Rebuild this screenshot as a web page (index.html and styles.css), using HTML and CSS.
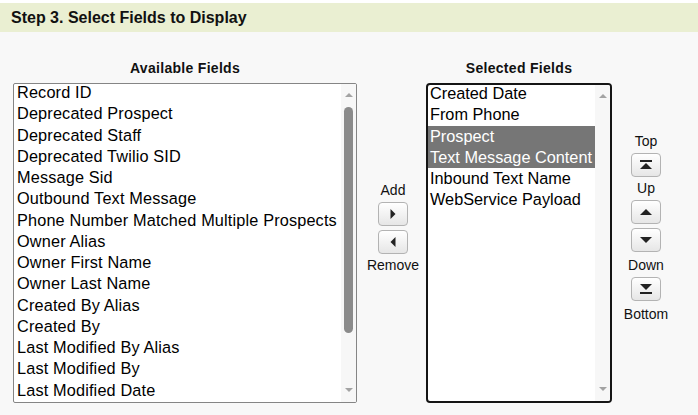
FILE: index.html
```html
<!DOCTYPE html>
<html lang="en">
<head>
    <meta charset="UTF-8">
    <meta name="viewport" content="width=device-width, initial-scale=1.0">
    <title>Select Fields to Display</title>
    <link rel="stylesheet" href="styles.css">
</head>
<body>

<div class="step">
    <h3 class="step-title">Step 3. Select Fields to Display</h3>

    <div class="picker">
        <!-- Campos disponíveis -->
        <div class="list-col available">
            <div class="list-label">Available Fields</div>
            <div class="listbox">
                <ul class="options">
                    <li>Record ID</li>
                    <li>Deprecated Prospect</li>
                    <li>Deprecated Staff</li>
                    <li>Deprecated Twilio SID</li>
                    <li>Message Sid</li>
                    <li>Outbound Text Message</li>
                    <li>Phone Number Matched Multiple Prospects</li>
                    <li>Owner Alias</li>
                    <li>Owner First Name</li>
                    <li>Owner Last Name</li>
                    <li>Created By Alias</li>
                    <li>Created By</li>
                    <li>Last Modified By Alias</li>
                    <li>Last Modified By</li>
                    <li>Last Modified Date</li>
                </ul>
                <div class="scrollbar">
                    <span class="sb-arrow up"><svg width="8" height="4" viewBox="0 0 8 4"><path d="M0 4L4 0L8 4Z"/></svg></span>
                    <span class="sb-thumb"></span>
                    <span class="sb-arrow down"><svg width="8" height="4" viewBox="0 0 8 4"><path d="M0 0L8 0L4 4Z"/></svg></span>
                </div>
            </div>
        </div>

        <!-- Adicionar / remover -->
        <div class="move-col add-remove">
            <div class="btn-label">Add</div>
            <button class="icon-btn" title="Add"><svg width="6" height="10" viewBox="0 0 6 10"><path d="M0.5 0L5.5 5L0.5 10Z"/></svg></button>
            <button class="icon-btn" title="Remove"><svg width="6" height="10" viewBox="0 0 6 10"><path d="M5.5 0L0.5 5L5.5 10Z"/></svg></button>
            <div class="btn-label">Remove</div>
        </div>

        <!-- Campos selecionados -->
        <div class="list-col selected">
            <div class="list-label">Selected Fields</div>
            <div class="listbox focused">
                <ul class="options">
                    <li>Created Date</li>
                    <li>From Phone</li>
                    <li class="is-selected">Prospect</li>
                    <li class="is-selected">Text Message Content</li>
                    <li>Inbound Text Name</li>
                    <li>WebService Payload</li>
                </ul>
                <div class="scrollbar">
                    <span class="sb-arrow up"><svg width="8" height="4" viewBox="0 0 8 4"><path d="M0 4L4 0L8 4Z"/></svg></span>
                    <span class="sb-arrow down"><svg width="8" height="4" viewBox="0 0 8 4"><path d="M0 0L8 0L4 4Z"/></svg></span>
                </div>
            </div>
        </div>

        <!-- Ordenação -->
        <div class="move-col order">
            <div class="btn-label">Top</div>
            <button class="icon-btn" title="Top"><svg width="12" height="10" viewBox="0 0 12 10"><rect x="0" y="0" width="12" height="2"/><path d="M0 9L6 3L12 9Z"/></svg></button>
            <div class="btn-label">Up</div>
            <button class="icon-btn" title="Up"><svg width="12" height="6" viewBox="0 0 12 6"><path d="M0 6L6 0L12 6Z"/></svg></button>
            <button class="icon-btn" title="Down"><svg width="12" height="6" viewBox="0 0 12 6"><path d="M0 0L12 0L6 6Z"/></svg></button>
            <div class="btn-label tall">Down</div>
            <button class="icon-btn" title="Bottom"><svg width="12" height="10" viewBox="0 0 12 10"><path d="M0 0L12 0L6 6Z"/><rect x="0" y="8" width="12" height="2"/></svg></button>
            <div class="btn-label last">Bottom</div>
        </div>
    </div>
</div>

</body>
</html>
```

FILE: styles.css
```css
body {
    font-family: 'Liberation Sans', Arial, sans-serif;
    background-color: #f8f8f8;
    color: #000;
    margin: 0;
    padding: 0;
}
.step-title {
    margin: 0;
    border-top: 3px solid #fff;
    background-color: #eaefd2; /* verde claro */
    height: 29px;
    line-height: 29px;
    padding-left: 11px;
    font-size: 16px;
    font-weight: bold;
    color: #111;
}
.picker {
    display: flex;
    padding: 28px 0 0 13px;
}
.list-col {
    display: flex;
    flex-direction: column;
}
.available {
    width: 344px;
}
.selected {
    width: 186px;
}
.list-label {
    text-align: center;
    font-size: 14px;
    font-weight: bold;
    letter-spacing: 0.3px;
    line-height: 16px;
    margin-bottom: 7px;
    color: #111;
}
.listbox {
    display: flex;
    height: 320px;
    box-sizing: border-box;
    background-color: #fff;
    border: 1px solid #858585;
    border-radius: 2px;
    overflow: hidden;
}
.listbox.focused {
    border: 2px solid #151515;
    border-radius: 4px;
}
.options {
    flex: 1;
    list-style: none;
    margin: -2px 0 0;
    padding: 0;
    overflow: hidden;
}
.options li {
    font-size: 16.3px;
    line-height: 21.25px;
    letter-spacing: 0.15px;
    padding-left: 3px;
    white-space: nowrap;
}
.focused .options li {
    padding-left: 2px;
    letter-spacing: 0;
}
.options li.is-selected {
    background-color: #767676;
    color: #fff;
}
.scrollbar {
    width: 15px;
    flex-shrink: 0;
    display: flex;
    flex-direction: column;
    align-items: center;
    background-color: #f7f7f7;
}
.sb-arrow {
    display: flex;
    align-items: center;
    justify-content: center;
    height: 22px;
    fill: #a3a3a3;
}
.sb-arrow.down {
    margin-top: auto;
    height: 24px;
}
.sb-thumb {
    width: 9px;
    height: 226px;
    margin-top: 1px;
    border-radius: 5px;
    background-color: #8b8b8b;
}
.move-col {
    display: flex;
    flex-direction: column;
    align-items: center;
}
.add-remove {
    width: 66px;
    padding: 119px 0 0 3px;
}
.order {
    width: 68px;
    padding-top: 70px;
}
.btn-label {
    font-size: 14px;
    line-height: 23px;
    color: #111;
}
.btn-label.tall {
    line-height: 24px;
    padding-top: 1px;
}
.btn-label.last {
    padding-top: 2px;
}
.icon-btn {
    width: 30px;
    height: 24px;
    padding: 0;
    display: flex;
    align-items: center;
    justify-content: center;
    border: 1px solid #b3b3b3;
    border-radius: 4px;
    background: linear-gradient(#fff, #e6e6e6);
    fill: #222;
    cursor: pointer;
}
.icon-btn + .icon-btn {
    margin-top: 4px;
}
```
